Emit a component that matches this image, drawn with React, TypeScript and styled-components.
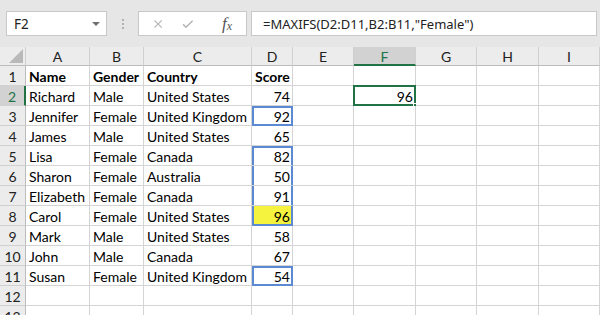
import React from "react"
import styled, { createGlobalStyle, css } from "styled-components"

const GlobalStyle = createGlobalStyle`
    html, body {
        margin: 0;
        padding: 0;
        background: #ffffff;
        overflow: hidden;
    }
`

const columns = [
    { name: "A", width: 64 },
    { name: "B", width: 54 },
    { name: "C", width: 108 },
    { name: "D", width: 41 },
    { name: "E", width: 61 },
    { name: "F", width: 62 },
    { name: "G", width: 61 },
    { name: "H", width: 62 },
    { name: "I", width: 61 },
]

type Row = [string, string, string, string]

const data: Row[] = [
    ["Name", "Gender", "Country", "Score"],
    ["Richard", "Male", "United States", "74"],
    ["Jennifer", "Female", "United Kingdom", "92"],
    ["James", "Male", "United States", "65"],
    ["Lisa", "Female", "Canada", "82"],
    ["Sharon", "Female", "Australia", "50"],
    ["Elizabeth", "Female", "Canada", "91"],
    ["Carol", "Female", "United States", "96"],
    ["Mark", "Male", "United States", "58"],
    ["John", "Male", "Canada", "67"],
    ["Susan", "Female", "United Kingdom", "54"],
    ["", "", "", ""],
    ["", "", "", ""],
]

// blue range boxes in column D, keyed by row number
const boxes: Record<number, Array<"top" | "bottom" | "side">> = {
    3: ["top", "bottom", "side"],
    5: ["top", "side"],
    6: ["side"],
    7: ["side"],
    8: ["bottom", "side"],
    11: ["top", "bottom", "side"],
}

export default function App() {
    return <Screen>
        <GlobalStyle />
        <FormulaBar>
            <NameBox>
                <span>F2</span>
                <DropArrow />
            </NameBox>
            <Grip>
                <i /><i /><i />
            </Grip>
            <ButtonBox>
                <svg width="14" height="14" viewBox="0 0 14 14">
                    <path d="M2 2 L12 12 M12 2 L2 12" stroke="#b4b4b4" strokeWidth="1.6" fill="none" />
                </svg>
                <svg width="16" height="14" viewBox="0 0 16 14">
                    <path d="M1.5 7.5 L5.5 11.5 L14.5 2.5" stroke="#b4b4b4" strokeWidth="2" fill="none" />
                </svg>
                <Fx>f<sub>x</sub></Fx>
            </ButtonBox>
            <FormulaInput>=MAXIFS(D2:D11,B2:B11,"Female")</FormulaInput>
        </FormulaBar>
        <Sheet>
            <Corner>
                <svg width="14" height="14" viewBox="0 0 14 14">
                    <path d="M14 0 L14 14 L0 14 Z" fill="#b9b9b9" />
                </svg>
            </Corner>
            {columns.map(c => <ColHead key={c.name} $selected={c.name === "F"}>{c.name}</ColHead>)}
            {data.map((row, i) => {
                const r = i + 1
                return <React.Fragment key={r}>
                    <RowHead $selected={r === 2}>{r}</RowHead>
                    <Cell $bold={r === 1}>{row[0]}</Cell>
                    <Cell $bold={r === 1}>{row[1]}</Cell>
                    <Cell $bold={r === 1}>{row[2]}</Cell>
                    <Cell
                        $bold={r === 1}
                        $num={r > 1}
                        $box={boxes[r]}
                        $fill={r === 8 ? "#f5f33e" : undefined}
                    >{row[3]}</Cell>
                    <Cell />
                    <Cell $num $active={r === 2}>{r === 2 ? "96" : ""}</Cell>
                    <Cell />
                    <Cell />
                    <Cell />
                </React.Fragment>
            })}
        </Sheet>
    </Screen>
}

const Screen = styled.div`
    width: 600px;
    height: 315px;
    overflow: hidden;
    background: #ffffff;
`

const FormulaBar = styled.div`
    height: 47px;
    box-sizing: border-box;
    padding: 11px 3px 11px 6px;
    background: #e6e6e6;
    display: flex;
    align-items: stretch;
    font-family: "Noto Sans", "Open Sans", sans-serif;
`

const boxed = css`
    background: #ffffff;
    border: 1px solid #c8c8c8;
    box-sizing: border-box;
`

const NameBox = styled.div`
    ${boxed};
    width: 101px;
    display: flex;
    align-items: center;
    justify-content: space-between;
    padding: 0 6px 0 7px;
    font-size: 13.5px;
    color: #222222;
`

const DropArrow = styled.div`
    width: 0;
    height: 0;
    border-left: 4px solid transparent;
    border-right: 4px solid transparent;
    border-top: 4px solid #707070;
`

const Grip = styled.div`
    width: 31px;
    display: flex;
    flex-direction: column;
    align-items: center;
    justify-content: center;
    gap: 2px;

    i {
        width: 2px;
        height: 2px;
        background: #b0b0b0;
    }
`

const ButtonBox = styled.div`
    ${boxed};
    width: 109px;
    display: flex;
    align-items: center;
    padding: 0 14px 0 14px;
    gap: 19px;
`

const Fx = styled.span`
    margin-left: 9px;
    font-family: "Liberation Serif", serif;
    font-style: italic;
    font-size: 17px;
    color: #555555;

    sub {
        font-size: 12px;
        vertical-align: -1px;
    }
`

const FormulaInput = styled.div`
    ${boxed};
    margin-left: 4px;
    flex: 1;
    display: flex;
    align-items: center;
    padding-left: 11px;
    font-size: 13px;
    color: #222222;
`

const Sheet = styled.div`
    display: grid;
    grid-template-columns: 26px ${columns.map(c => `${c.width}px`).join(" ")};
    grid-template-rows: 19px;
    grid-auto-rows: 20px;
    background: #e6e6e6;
    font-family: Lato, "Liberation Sans", sans-serif;
    font-size: 14px;
`

const Corner = styled.div`
    background: #ececec;
    border-right: 1px solid #d0d0d0;
    border-bottom: 1px solid #bcbcbc;
    box-sizing: border-box;
    display: flex;
    align-items: flex-end;
    justify-content: flex-end;
    padding: 0 2px 2px 0;
`

const ColHead = styled.div<{ $selected?: boolean }>`
    box-sizing: border-box;
    background: ${({ $selected }) => $selected ? "#d2d2d2" : "#ececec"};
    color: ${({ $selected }) => $selected ? "#217346" : "#222222"};
    border-right: 1px solid #d0d0d0;
    border-bottom: ${({ $selected }) => $selected ? "2px solid #217346" : "1px solid #bcbcbc"};
    display: flex;
    align-items: center;
    justify-content: center;
    padding-top: ${({ $selected }) => $selected ? "1px" : "0"};
`

const RowHead = styled.div<{ $selected?: boolean }>`
    box-sizing: border-box;
    background: ${({ $selected }) => $selected ? "#d2d2d2" : "#ececec"};
    color: ${({ $selected }) => $selected ? "#217346" : "#222222"};
    border-bottom: 1px solid #d0d0d0;
    border-right: ${({ $selected }) => $selected ? "2px solid #217346" : "1px solid #bcbcbc"};
    display: flex;
    align-items: center;
    justify-content: center;
    padding-top: 1px;
`

const BLUE = "#5b8ad2"

const boxShadow = (parts?: Array<"top" | "bottom" | "side">) => {
    if (!parts) return "none"
    const s: string[] = []
    if (parts.includes("side")) s.push(`inset 2px 0 0 ${BLUE}`, `inset -1px 0 0 ${BLUE}`)
    if (parts.includes("top")) s.push(`inset 0 2px 0 ${BLUE}`)
    if (parts.includes("bottom")) s.push(`inset 0 -1px 0 ${BLUE}`)
    return s.join(", ")
}

const Cell = styled.div<{
    $bold?: boolean
    $num?: boolean
    $box?: Array<"top" | "bottom" | "side">
    $fill?: string
    $active?: boolean
}>`
    position: relative;
    box-sizing: border-box;
    background: ${({ $fill }) => $fill || "#ffffff"};
    border-right: 1px solid ${({ $box }) => $box ? BLUE : "#d4d4d4"};
    border-bottom: 1px solid ${({ $box }) => $box && $box.includes("bottom") ? BLUE : "#d4d4d4"};
    box-shadow: ${({ $box }) => boxShadow($box)};
    display: flex;
    align-items: center;
    justify-content: ${({ $num }) => $num ? "flex-end" : "flex-start"};
    padding: 1px 2px 0 3px;
    font-weight: ${({ $bold }) => $bold ? 700 : 400};
    color: #000000;
    white-space: nowrap;

    ${({ $active }) => $active && css`
        border: none;
        box-shadow: inset 0 0 0 2px #217346;
        margin: -1px 0 0 -1px;
        padding-right: 3px;

        &::after {
            content: "";
            position: absolute;
            right: -3px;
            bottom: -3px;
            width: 6px;
            height: 6px;
            background: #217346;
            border: 1px solid #ffffff;
            border-right: none;
            border-bottom: none;
            box-sizing: border-box;
        }
    `}
`
